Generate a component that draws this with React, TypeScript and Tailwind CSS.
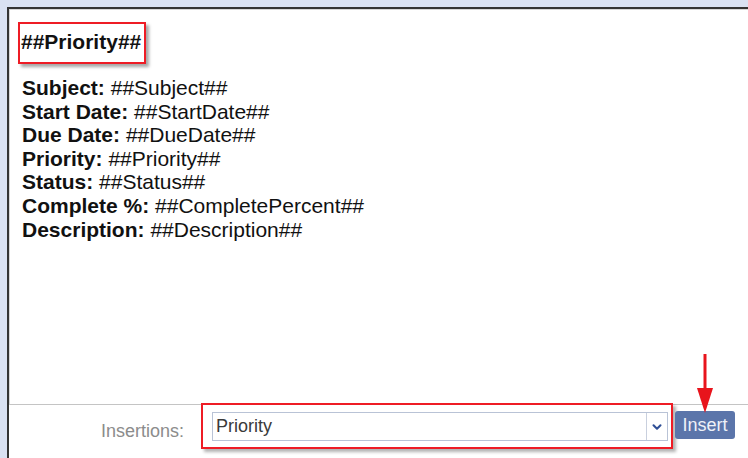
import { ChevronDown } from "lucide-react";

const fields: [string, string][] = [
  ["Subject", "##Subject##"],
  ["Start Date", "##StartDate##"],
  ["Due Date", "##DueDate##"],
  ["Priority", "##Priority##"],
  ["Status", "##Status##"],
  ["Complete %", "##CompletePercent##"],
  ["Description", "##Description##"],
];

function Arrow() {
  return (
    <svg
      className="absolute left-[696px] top-[354px]"
      width="18"
      height="60"
      viewBox="0 0 18 60"
    >
      <line x1="9" y1="0" x2="9" y2="38" stroke="#e8141c" strokeWidth="3" />
      <polygon points="1,34 17,34 9,59" fill="#e8141c" />
    </svg>
  );
}

export default function App() {
  return (
    <div
      className="relative w-[748px] h-[458px] overflow-hidden bg-[#d9e1f2] pl-[7px] pt-[7px]"
      style={{ fontFamily: '"Liberation Sans", Arial, sans-serif' }}
    >
      <div className="flex h-full flex-col border-l-2 border-t-2 border-[#333] bg-white">
        {/* editor body */}
        <div className="h-[396px] border-l border-t border-b border-l-[#d6d6d6] border-t-[#d6d6d6] border-b-[#c4c4c4]">
          <div className="ml-[8px] mt-[12px] inline-block border-2 border-[#ee1c25] pl-[1px] pr-[3px] pt-[6px] pb-[8px] shadow-[3px_3px_3px_rgba(0,0,0,0.35)]">
            <div className="text-[21px] font-bold leading-[24px] text-[#111]">##Priority##</div>
          </div>
          <div className="ml-[12px] mt-[12px] text-[21px] leading-[23.6px] text-[#111]">
            {fields.map(([label, value]) => (
              <div key={label}>
                <span className="font-bold">{label}:</span> {value}
              </div>
            ))}
          </div>
        </div>

        {/* insertion toolbar */}
        <div className="flex flex-1 items-start">
          <div className="mt-[12px] w-[176px] pr-[1px] text-right text-[18px] leading-[28px] text-[#8c8c8c]">
            Insertions:
          </div>
          <div className="ml-[16px] mt-[-2px] border-2 border-[#ee1c25] pl-[9px] pr-[3px] pt-[7px] pb-[6px] shadow-[3px_3px_3px_rgba(0,0,0,0.3)]">
            <div className="flex h-[29px] w-[456px] items-stretch border border-[#b9c3d6] bg-white">
              <div className="flex-1 pl-[3px] text-[18px] leading-[27px] text-[#3a3a3a]">Priority</div>
              <div className="flex w-[21px] items-center justify-center border-l border-[#c9d0de]">
                <ChevronDown className="h-[14px] w-[14px] text-[#2f4f96]" strokeWidth={3.5} />
              </div>
            </div>
          </div>
          <button className="ml-[2px] mt-[6px] h-[28px] w-[60px] rounded-[3px] bg-[#5b75aa] text-[18px] leading-[28px] text-[#eef1f8]">
            Insert
          </button>
        </div>
      </div>
      <Arrow />
    </div>
  );
}
